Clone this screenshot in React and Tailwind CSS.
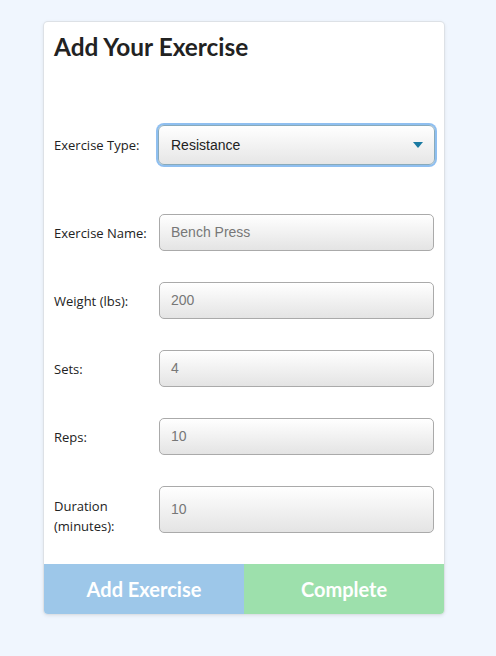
import React from 'react';

const fields = [
  { label: 'Exercise Name:', value: 'Bench Press' },
  { label: 'Weight (lbs):', value: '200' },
  { label: 'Sets:', value: '4' },
  { label: 'Reps:', value: '10' },
  { label: 'Duration (minutes):', value: '10', tall: true },
];

function Field({ label, value, tall }) {
  return (
    <div className={`flex mt-[31px] first:mt-0 ${tall ? 'items-start' : 'items-center'}`}>
      <label className={`w-[105px] shrink-0 text-[13px] leading-[20px] text-[#222] ${tall ? 'pt-[10px]' : ''}`}>
        {label}
      </label>
      <div
        className={`flex-1 flex items-center px-[11px] border border-[#aaa] rounded-[5px] bg-gradient-to-b from-white to-[#e4e4e4] text-[14px] text-[#777] font-['Liberation_Sans',Arial,sans-serif] ${tall ? 'h-[47px]' : 'h-[37px]'}`}
      >
        {value}
      </div>
    </div>
  );
}

export default function App() {
  return (
    <div className="min-h-screen w-full bg-[#f0f6fe] pt-[22px] font-['Open_Sans',sans-serif]">
      <div className="ml-[44px] w-[400px] h-[592px] flex flex-col bg-white rounded-[4px] shadow-[0_0_0_1px_#dde1e6,0_1px_4px_rgba(0,0,0,0.12)] overflow-hidden">
        <h1 className="px-[10px] pt-[10px] text-[24.4px] leading-[30px] font-bold text-[#222] font-['Lato',sans-serif]">
          Add Your Exercise
        </h1>

        <div className="flex-1 px-[10px]">
          <div className="flex items-center mt-[63px]">
            <label className="w-[104px] shrink-0 text-[13px] leading-[20px] text-[#222]">Exercise Type:</label>
            <div className="flex-1 mr-[-1px] h-[40px] flex items-center justify-between pl-[12px] pr-[11px] border border-[#8ab] rounded-[6px] shadow-[0_0_0_2px_#8fbff0] bg-gradient-to-b from-white to-[#e6e6e6] text-[14px] text-[#222] font-['Liberation_Sans',Arial,sans-serif]">
              <span>Resistance</span>
              <svg width="10" height="6" viewBox="0 0 10 6">
                <path d="M0 0h10L5 6z" fill="#1a7aa2" />
              </svg>
            </div>
          </div>

          <div className="mt-[49px]">
            {fields.map((f) => (
              <Field key={f.label} {...f} />
            ))}
          </div>
        </div>

        <div className="flex h-[50px] text-white text-[20px] font-bold font-['Lato',sans-serif]">
          <button className="flex-1 bg-[#9dc7e9]">Add Exercise</button>
          <button className="flex-1 bg-[#9de0ac]">Complete</button>
        </div>
      </div>
    </div>
  );
}
